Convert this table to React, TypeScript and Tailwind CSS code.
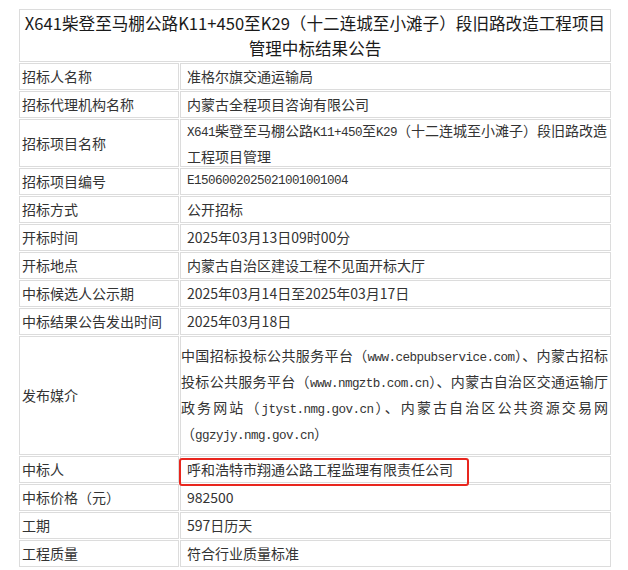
import React from "react";

const mono = "font-['Liberation_Mono',monospace] text-[12.6px] tracking-[-0.56px]";

function Label({ children, h }: { children: React.ReactNode; h: string }) {
  return (
    <div className={`${h} border border-[#dcdcdc] pl-[2px] flex items-center text-[14px] text-[#333] leading-[23px]`}>
      {children}
    </div>
  );
}

function Value({ children, h, extra = "" }: { children: React.ReactNode; h: string; extra?: string }) {
  return (
    <div className={`${h} border border-[#dcdcdc] pl-[6px] flex items-center text-[14px] text-[#333] leading-[23px] ${extra}`}>
      {children}
    </div>
  );
}

export default function App() {
  const justify = "text-justify [text-align-last:justify]";
  return (
    <div className="w-[628px] h-[570px] bg-white font-['Noto_Sans_CJK_SC',sans-serif] pt-[8px] pl-[18px]">
      <div className="w-[594px] grid grid-cols-[160px_431px] gap-[1px] p-[1px]">
        <div className="col-span-2 h-[53px] border border-[#dcdcdc] flex flex-col items-center justify-center text-[16.6px] leading-[25px] text-[#1a1a1a]">
          <div className="whitespace-nowrap">X641柴登至马棚公路K11+450至K29（十二连城至小滩子）段旧路改造工程项目</div>
          <div className="whitespace-nowrap">管理中标结果公告</div>
        </div>

        <Label h="h-[27px]">招标人名称</Label>
        <Value h="h-[27px]">准格尔旗交通运输局</Value>

        <Label h="h-[27px]">招标代理机构名称</Label>
        <Value h="h-[27px]">内蒙古全程项目咨询有限公司</Value>

        <Label h="h-[48px]">招标项目名称</Label>
        <Value h="h-[48px]">
          <div>
            <div className="whitespace-nowrap">
              <span className={mono}>X641</span>柴登至马棚公路<span className={mono}>K11+450</span>至<span className={mono}>K29</span>（十二连城至小滩子）段旧路改造
            </div>
            <div>工程项目管理</div>
          </div>
        </Value>

        <Label h="h-[27px]">招标项目编号</Label>
        <Value h="h-[27px]">
          <span className={mono}>E1506002025021001001004</span>
        </Value>

        <Label h="h-[27px]">招标方式</Label>
        <Value h="h-[27px]">公开招标</Value>

        <Label h="h-[27px]">开标时间</Label>
        <Value h="h-[27px]">2025年03月13日09时00分</Value>

        <Label h="h-[27px]">开标地点</Label>
        <Value h="h-[27px]">内蒙古自治区建设工程不见面开标大厅</Value>

        <Label h="h-[27px]">中标候选人公示期</Label>
        <Value h="h-[27px]">2025年03月14日至2025年03月17日</Value>

        <Label h="h-[27px]">中标结果公告发出时间</Label>
        <Value h="h-[27px]">2025年03月18日</Value>

        <Label h="h-[119px]">发布媒介</Label>
        <div className="h-[119px] border border-[#dcdcdc] pr-[2px] flex items-center text-[14px] text-[#333] leading-[23px]">
          <div className="w-full">
            <div className={`${justify} whitespace-nowrap`}>
              中国招标投标公共服务平台（<span className={mono}>www.cebpubservice.com</span>）、内蒙古招标
            </div>
            <div className={`${justify} whitespace-nowrap`}>
              投标公共服务平台（<span className={mono}>www.nmgztb.com.cn</span>）、内蒙古自治区交通运输厅
            </div>
            <div className={`${justify} whitespace-nowrap`}>
              政务网站（<span className={mono}>jtyst.nmg.gov.cn</span>）、内蒙古自治区公共资源交易网
            </div>
            <div className="whitespace-nowrap">
              （<span className={mono}>ggzyjy.nmg.gov.cn</span>）
            </div>
          </div>
        </div>

        <Label h="h-[27px]">中标人</Label>
        <Value h="h-[27px]" extra="relative">
          <span>呼和浩特市翔通公路工程监理有限责任公司</span>
          <span className="absolute left-[-2px] top-[1px] w-[290px] h-[28px] border-2 border-[#e8261e] rounded-[3px]"></span>
        </Value>

        <Label h="h-[27px]">中标价格（元）</Label>
        <Value h="h-[27px]">982500</Value>

        <Label h="h-[27px]">工期</Label>
        <Value h="h-[27px]">597日历天</Value>

        <Label h="h-[27px]">工程质量</Label>
        <Value h="h-[27px]">符合行业质量标准</Value>
      </div>
    </div>
  );
}
